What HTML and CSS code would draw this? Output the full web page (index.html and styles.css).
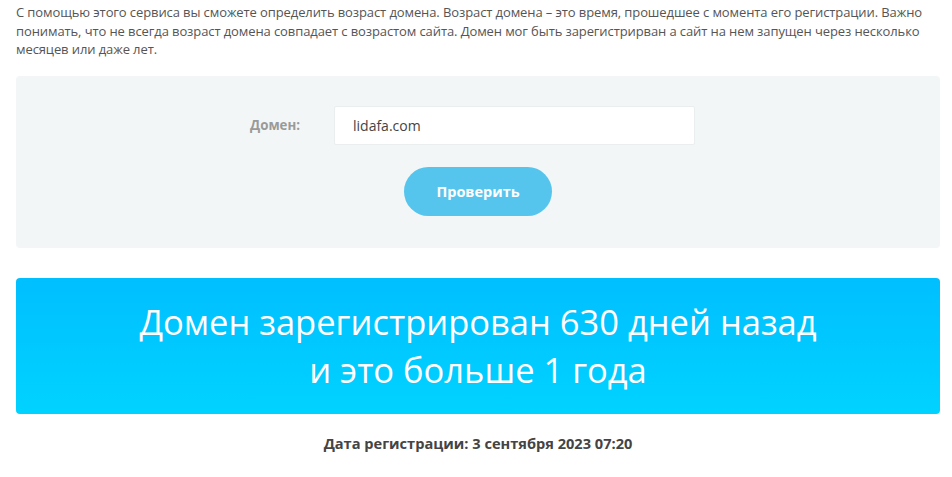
FILE: index.html
```html
<!DOCTYPE html>
<html lang="ru">
<head>
<meta charset="utf-8">
<link rel="stylesheet" href="styles.css">
</head>
<body>
<div class="page">
  <p class="intro">С помощью этого сервиса вы сможете определить возраст домена. Возраст домена – это время, прошедшее с момента его регистрации. Важно понимать, что не всегда возраст домена совпадает с возрастом сайта. Домен мог быть зарегистрирван а сайт на нем запущен через несколько месяцев или даже лет.</p>
  <form class="check-box">
    <div class="field-row">
      <label class="field-label" for="domain">Домен:</label>
      <input class="field-input" id="domain" type="text" value="lidafa.com">
    </div>
    <button class="check-btn" type="button">Проверить</button>
  </form>
  <div class="result">
    <div class="result-line">Домен зарегистрирован 630 дней назад</div>
    <div class="result-line">и это больше 1 года</div>
  </div>
  <div class="reg-date">Дата регистрации: 3 сентября 2023 07:20</div>
</div>
</body>
</html>
```
FILE: styles.css
```css
html, body {
  margin: 0;
  padding: 0;
  background: #fff;
}
.page {
  padding: 3px 12px 0 16px;
  font-family: "Open Sans", "Noto Sans", sans-serif;
}
.intro {
  margin: 0;
  font-size: 13px;
  line-height: 18.5px;
  color: #555;
  letter-spacing: -0.1px;
}
.check-box {
  margin: 17px 0 0;
  background: #f3f6f6;
  border-radius: 4px;
  padding: 30px 0 32px;
  display: flex;
  flex-direction: column;
  align-items: center;
  gap: 22px;
}
.field-row {
  display: flex;
  align-items: center;
  padding-right: 11px;
}
.field-label {
  width: 84px;
  font-size: 13.3px;
  font-weight: 700;
  color: #9a9a9a;
}
.field-input {
  box-sizing: border-box;
  width: 361px;
  height: 39px;
  border: 1px solid #ebeeee;
  border-radius: 2px;
  background: #fff;
  padding: 0 18px;
  font-family: "Open Sans", sans-serif;
  font-size: 14px;
  color: #444;
  outline: none;
}
.check-btn {
  width: 148px;
  height: 49px;
  border: none;
  border-radius: 25px;
  background: #55c5ed;
  color: #fff;
  font-family: "Open Sans", sans-serif;
  font-size: 14.5px;
  font-weight: 700;
}
.result {
  margin-top: 30px;
  border-radius: 4px;
  background: linear-gradient(180deg, #00bfff 0%, #00d3ff 100%);
  padding: 20px 0 20px;
  text-align: center;
  color: #fff;
  font-size: 34.5px;
  line-height: 48px;
  font-weight: 400;
}
.reg-date {
  margin-top: 19px;
  text-align: center;
  font-size: 14.6px;
  font-weight: 700;
  color: #444;
}
```
